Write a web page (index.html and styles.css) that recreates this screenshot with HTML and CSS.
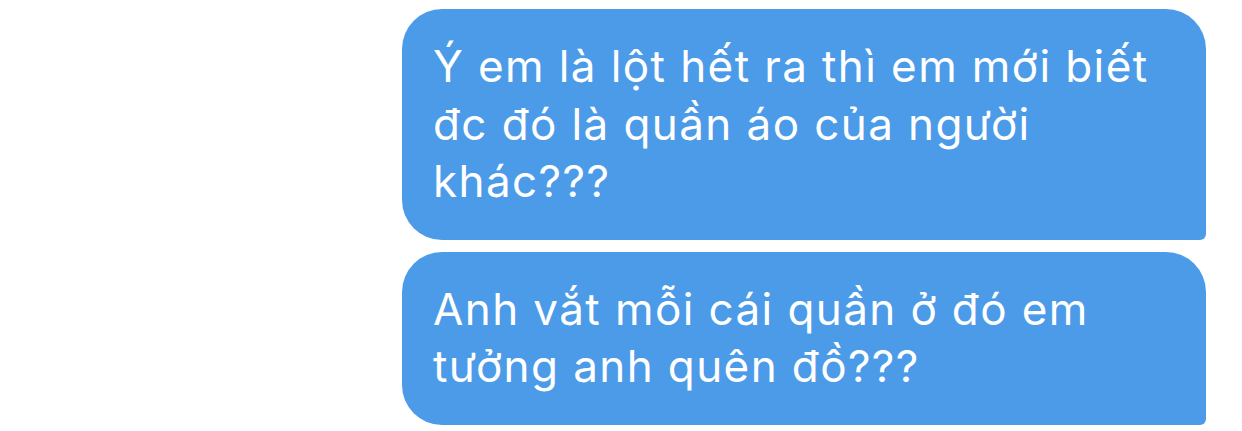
FILE: index.html
```html
<!DOCTYPE html>
<html lang="vi">
<head>
  <meta charset="UTF-8">
  <meta name="viewport" content="width=device-width, initial-scale=1.0">
  <title>Tin nhắn</title>
  <link rel="stylesheet" href="styles.css">
</head>
<body>
  <div class="chat">
    <div class="bubble">Ý em là lột hết ra thì em mới biết đc đó là quần áo của người khác???</div>
    <div class="bubble">Anh vắt mỗi cái quần ở đó em tưởng anh quên đồ???</div>
  </div>
</body>
</html>
```

FILE: styles.css
```css
*{ padding: 0; margin: 0; box-sizing: border-box; }
body{ background: #fff; font-family: Inter, "Noto Sans", sans-serif; }
.chat{ display: flex; flex-direction: column; align-items: flex-end; gap: 12px; padding: 9px 36px 0 0; }
.bubble{ width: 804px; padding: 29px 31px; background-color: #4c9be8; color: #fff;
      font-size: 44px; line-height: 57.5px; letter-spacing: 1.4px;
      border-radius: 40px 40px 6px 40px;
}
```
